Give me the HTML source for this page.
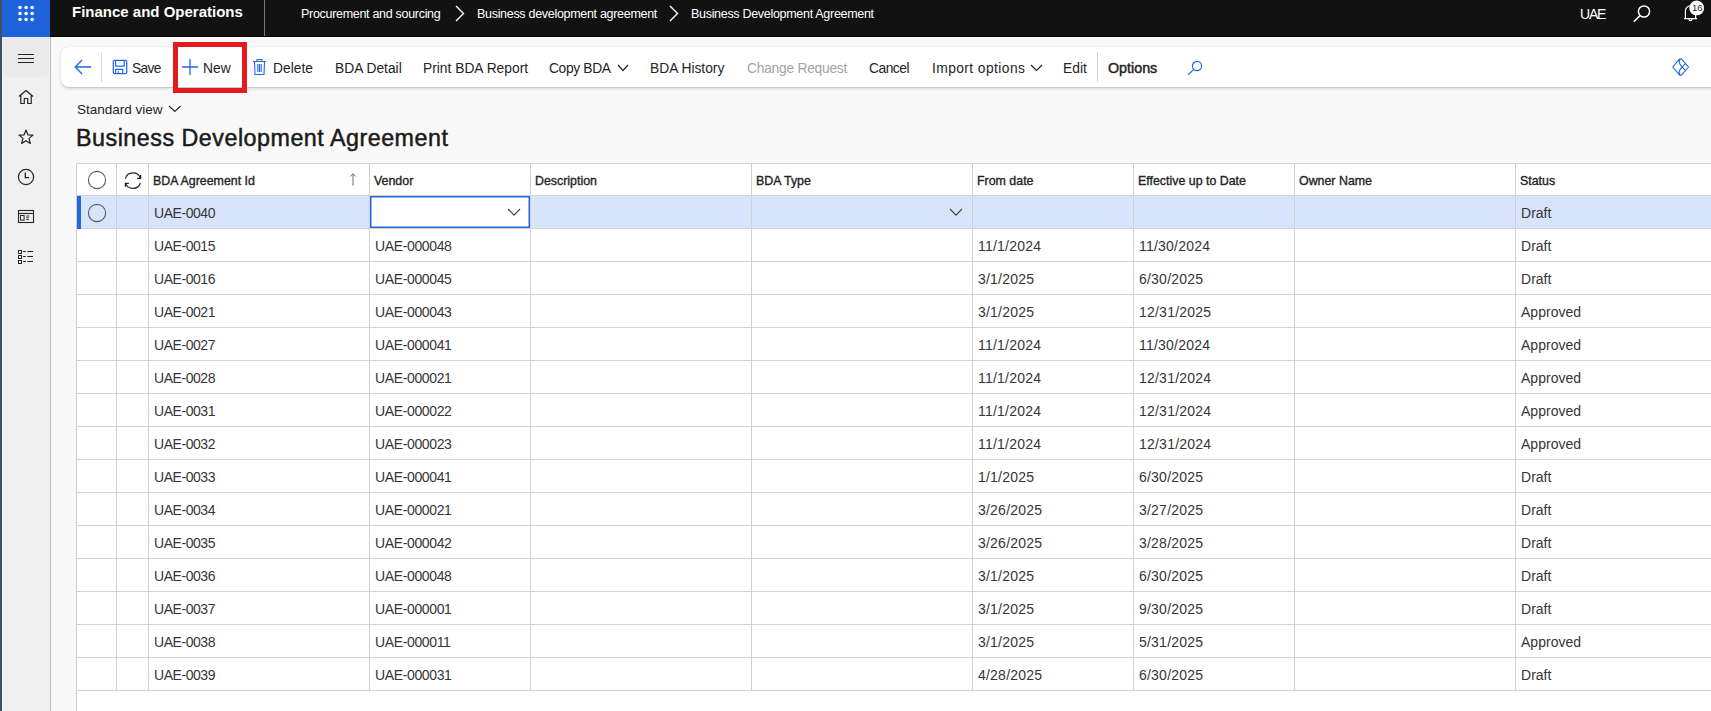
<!DOCTYPE html>
<html><head><meta charset="utf-8">
<style>
*{box-sizing:border-box;margin:0;padding:0}
html,body{width:1711px;height:711px;overflow:hidden;background:#f9f9f9;font-family:"Liberation Sans",sans-serif;color:#242424}
.abs{position:absolute}
#strip{left:0;top:0;width:2px;height:711px;background:#414e66}
#hdr{left:2px;top:0;width:1709px;height:37px;background:#121212;border-bottom:1px solid #000}
#launch{left:2px;top:0;width:48px;height:37px;background:#1f63db}
.dot{position:absolute;width:3.6px;height:3.6px;border-radius:50%;background:#fff}
#nav{left:2px;top:37px;width:49px;height:674px;background:#f1f0f0;border-right:1px solid #b9b9b9}
#ham{left:3px;top:37px;width:46px;height:40px;background:#ebeaea;border-radius:0 0 6px 6px}
.t{position:absolute;white-space:nowrap;line-height:1}
#brand{left:72px;top:4px;font-size:15px;font-weight:bold;color:#fff}
#hsep{left:264px;top:0;width:1px;height:36px;background:#76767c}
.bc{color:#fff;font-size:12.5px;letter-spacing:-0.3px;top:8px}
#uae{left:1580px;top:7px;font-size:14px;letter-spacing:-1.2px;color:#fff}
#ap{left:61px;top:47px;width:1670px;height:40px;background:#fff;border-radius:8px;box-shadow:0 1.6px 3.6px rgba(0,0,0,.13),0 .3px .9px rgba(0,0,0,.11)}
.ab{position:absolute;top:62px;font-size:13.8px;color:#242424;white-space:nowrap;line-height:1}
#redbox{left:173px;top:42px;width:74px;height:51px;border:5px solid #e41b1b}
#sv{left:77px;top:103px;font-size:13.5px;color:#242424}
#title{left:76px;top:127px;font-size:23.3px;letter-spacing:0.5px;color:#1b1b1b;-webkit-text-stroke:0.5px #1b1b1b}
#grid{left:76px;top:163px;width:1640px;height:560px;background:#fff;border-left:1px solid #d1d1d1;border-top:1px solid #d1d1d1}
.hl{position:absolute;left:76px;width:1640px;height:1px;background:#d1d1d1}
.vl{position:absolute;width:1px;background:#d1d1d1}
.hd{position:absolute;top:175px;font-size:12.4px;font-weight:normal;-webkit-text-stroke:0.35px #242424;color:#242424;white-space:nowrap;line-height:1}
.c{position:absolute;font-size:14px;color:#363636;white-space:nowrap;line-height:1}
</style></head><body>
<div id="strip" class="abs"></div>
<div id="hdr" class="abs"></div>
<div id="launch" class="abs"></div>
<svg class="abs" style="left:0;top:0" width="50" height="30" viewBox="0 0 50 30"><circle cx="20" cy="7.4" r="1.75" fill="#fff"/><circle cx="26.1" cy="7.4" r="1.75" fill="#fff"/><circle cx="32.2" cy="7.4" r="1.75" fill="#fff"/><circle cx="20" cy="13.5" r="1.75" fill="#fff"/><circle cx="26.1" cy="13.5" r="1.75" fill="#fff"/><circle cx="32.2" cy="13.5" r="1.75" fill="#fff"/><circle cx="20" cy="19.6" r="1.75" fill="#fff"/><circle cx="26.1" cy="19.6" r="1.75" fill="#fff"/><circle cx="32.2" cy="19.6" r="1.75" fill="#fff"/></svg>
<div id="brand" class="t">Finance and Operations</div>
<div id="hsep" class="abs"></div>
<div class="t bc" style="left:301px">Procurement and sourcing</div>
<svg class="abs" style="left:454px;top:5px" width="12" height="17" viewBox="0 0 12 17"><path d="M2 1 L9.5 8.5 L2 16" fill="none" stroke="#fff" stroke-width="1.4"/></svg>
<div class="t bc" style="left:477px">Business development agreement</div>
<svg class="abs" style="left:668px;top:5px" width="12" height="17" viewBox="0 0 12 17"><path d="M2 1 L9.5 8.5 L2 16" fill="none" stroke="#fff" stroke-width="1.4"/></svg>
<div class="t bc" style="left:691px">Business Development Agreement</div>
<div id="uae" class="t">UAE</div>
<svg class="abs" style="left:1632px;top:4px" width="20" height="20" viewBox="0 0 20 20"><circle cx="12" cy="7.5" r="5.6" fill="none" stroke="#fff" stroke-width="1.5"/><path d="M8 11.6 L1.8 17.8" stroke="#fff" stroke-width="1.5"/></svg>
<svg class="abs" style="left:1680px;top:0px" width="31" height="24" viewBox="0 0 31 24"><path d="M4 18.6 h13 M5.4 18.6 V11 a5.1 5.1 0 0 1 10.2 0 V18.6 M9 19.2 a1.5 1.5 0 0 0 3 0" fill="none" stroke="#fff" stroke-width="1.2"/><circle cx="16.7" cy="7.9" r="7.4" fill="#fff"/></svg>
<div class="t" style="left:1692px;top:3px;font-size:9.6px;letter-spacing:-0.2px;color:#242424">16</div>

<div id="nav" class="abs"></div>
<div id="ham" class="abs"></div>
<svg class="abs" style="left:17px;top:52px" width="18" height="12" viewBox="0 0 18 12"><path d="M1 2.5 H17 M1 6.5 H17 M1 10.5 H17" stroke="#242424" stroke-width="1"/></svg>
<svg class="abs" style="left:18px;top:89px" width="16" height="16" viewBox="0 0 16 16"><path d="M1 7.5 L8 1.5 L15 7.5 M2.8 6 V14.5 H6.3 V9.5 H9.7 V14.5 H13.2 V6" fill="none" stroke="#242424" stroke-width="1.2" stroke-linejoin="round"/></svg>
<svg class="abs" style="left:18px;top:129px" width="16" height="16" viewBox="0 0 16 16"><path d="M8 1 L9.9 5.8 L15 6.1 L11 9.4 L12.3 14.5 L8 11.7 L3.7 14.5 L5 9.4 L1 6.1 L6.1 5.8 Z" fill="none" stroke="#242424" stroke-width="1.2" stroke-linejoin="round"/></svg>
<svg class="abs" style="left:17px;top:168px" width="18" height="18" viewBox="0 0 18 18"><circle cx="9" cy="9" r="7.6" fill="none" stroke="#242424" stroke-width="1.2"/><path d="M8.3 4.5 V9.6 H12" fill="none" stroke="#242424" stroke-width="1.3"/></svg>
<svg class="abs" style="left:12px;top:200px" width="28" height="70" viewBox="0 0 28 70"><rect x="6.5" y="10.5" width="15" height="12" fill="none" stroke="#242424" stroke-width="1.1"/><path d="M6.5 13.5 H21.5" stroke="#242424" stroke-width="1.1"/><rect x="8.5" y="15.5" width="3.6" height="4.6" fill="none" stroke="#242424" stroke-width="1"/><path d="M14.2 16 H17.3 M14.2 17.8 H16.8 M14.2 19.6 H16.8" stroke="#242424" stroke-width="0.9"/><rect x="6.5" y="50.5" width="3" height="3" fill="none" stroke="#242424" stroke-width="1"/><rect x="6.5" y="55.5" width="3" height="3" fill="none" stroke="#242424" stroke-width="1"/><rect x="6.5" y="60.5" width="3" height="3" fill="none" stroke="#242424" stroke-width="1"/><path d="M11 51.5 H13.8 M15.3 51.5 H21 M11 56.5 H13.8 M15.3 56.5 H21 M11 61.5 H13.8 M15.3 61.5 H21" stroke="#242424" stroke-width="1"/></svg>

<!-- Action pane -->
<div id="ap" class="abs"></div>
<svg class="abs" style="left:74px;top:59px" width="18" height="16" viewBox="0 0 18 16"><path d="M8 1 L1.3 8 L8 15 M1.5 8 H17" fill="none" stroke="#2266e3" stroke-width="1.3"/></svg>
<div class="abs" style="left:101px;top:52px;width:1px;height:30px;background:#d6d6d6"></div>
<svg class="abs" style="left:112px;top:59px" width="16" height="16" viewBox="0 0 16 16"><rect x="1.3" y="1.3" width="13.4" height="13.2" rx="1" fill="none" stroke="#2266e3" stroke-width="1.25"/><path d="M3.6 1.3 V7.1 H12.2 V1.3 M3.6 14.5 V10.3 H10.7 V14.5 M6.4 12.3 V14.5" fill="none" stroke="#2266e3" stroke-width="1.2"/></svg>
<div class="ab" style="left:132px;letter-spacing:-0.7px">Save</div>
<svg class="abs" style="left:181px;top:58px" width="18" height="18" viewBox="0 0 18 18"><path d="M9 1 V17 M1 9 H17" stroke="#2266e3" stroke-width="1.3"/></svg>
<div class="ab" style="left:203px">New</div>
<svg class="abs" style="left:252px;top:58px" width="15" height="18" viewBox="0 0 15 18"><path d="M1 3.5 H14 M5 3.5 V1.5 H10 V3.5 M2.5 3.5 L3 16.5 H12 L12.5 3.5 M5.8 6 V14 M7.5 6 V14 M9.2 6 V14" fill="none" stroke="#2266e3" stroke-width="1.1"/></svg>
<div class="ab" style="left:273px">Delete</div>
<div class="ab" style="left:335px">BDA Detail</div>
<div class="ab" style="left:423px">Print BDA Report</div>
<div class="ab" style="left:549px;letter-spacing:-0.35px">Copy BDA</div>
<svg class="abs" style="left:617px;top:64px" width="12" height="8" viewBox="0 0 12 8"><path d="M1 1 L6 6.5 L11 1" fill="none" stroke="#242424" stroke-width="1.2"/></svg>
<div class="ab" style="left:650px">BDA History</div>
<div class="ab" style="left:747px;color:#a3a3a3;letter-spacing:-0.25px">Change Request</div>
<div class="ab" style="left:869px;letter-spacing:-0.5px">Cancel</div>
<div class="ab" style="left:932px;letter-spacing:0.42px">Import options</div>
<svg class="abs" style="left:1030px;top:64px" width="13" height="8" viewBox="0 0 13 8"><path d="M1 1 L6.5 6.5 L12 1" fill="none" stroke="#242424" stroke-width="1.2"/></svg>
<div class="ab" style="left:1063px">Edit</div>
<div class="abs" style="left:1097px;top:52px;width:1px;height:30px;background:#d6d6d6"></div>
<div class="ab" style="left:1108px;top:61px;font-size:14.3px;-webkit-text-stroke:0.45px #242424">Options</div>
<svg class="abs" style="left:1187px;top:60px" width="16" height="16" viewBox="0 0 16 16"><circle cx="10" cy="6" r="4.6" fill="none" stroke="#2266e3" stroke-width="1.2"/><path d="M6.7 9.3 L1.2 14.8" stroke="#2266e3" stroke-width="1.2"/></svg>
<svg class="abs" style="left:1670px;top:56px" width="22" height="22" viewBox="0 0 22 22"><path d="M2.8 11 L9.2 3.3 Q10.5 2.4 11.8 3.3 L18.6 11 L11.8 18.7 Q10.5 19.6 9.2 18.7 Z M10 3.4 Q7.6 6.4 12.2 11 Q7.6 15.6 10 18.6 M12.2 11 L15.4 7.3 M12.2 11 L15.4 14.7" fill="none" stroke="#2266e3" stroke-width="1.1" stroke-linejoin="round"/></svg>
<div id="redbox" class="abs"></div>

<div id="sv" class="t">Standard view</div>
<svg class="abs" style="left:168px;top:105px" width="14" height="8" viewBox="0 0 14 8"><path d="M1 1 L6.8 6.5 L12.6 1" fill="none" stroke="#242424" stroke-width="1.1"/></svg>
<div id="title" class="t">Business Development Agreement</div>

<!-- Grid -->
<div id="grid" class="abs"></div>
<!--ROWS-->
<div class="abs" style="left:77px;top:196px;width:1640px;height:32px;background:#d8e4fb"></div>
<div class="hl" style="top:195px"></div>
<div class="hl" style="top:228px"></div>
<div class="hl" style="top:261px"></div>
<div class="hl" style="top:294px"></div>
<div class="hl" style="top:327px"></div>
<div class="hl" style="top:360px"></div>
<div class="hl" style="top:393px"></div>
<div class="hl" style="top:426px"></div>
<div class="hl" style="top:459px"></div>
<div class="hl" style="top:492px"></div>
<div class="hl" style="top:525px"></div>
<div class="hl" style="top:558px"></div>
<div class="hl" style="top:591px"></div>
<div class="hl" style="top:624px"></div>
<div class="hl" style="top:657px"></div>
<div class="hl" style="top:690px"></div>
<div class="vl" style="left:116px;top:163px;height:528px"></div>
<div class="vl" style="left:148px;top:163px;height:528px"></div>
<div class="vl" style="left:369px;top:163px;height:528px"></div>
<div class="vl" style="left:530px;top:163px;height:528px"></div>
<div class="vl" style="left:751px;top:163px;height:528px"></div>
<div class="vl" style="left:972px;top:163px;height:528px"></div>
<div class="vl" style="left:1133px;top:163px;height:528px"></div>
<div class="vl" style="left:1294px;top:163px;height:528px"></div>
<div class="vl" style="left:1515px;top:163px;height:528px"></div>
<div class="abs" style="left:77px;top:196px;width:4px;height:33px;background:#2266e3"></div>
<svg class="abs" style="left:87px;top:170px" width="20" height="20" viewBox="0 0 20 20"><circle cx="10" cy="10" r="8.6" fill="none" stroke="#5c5c5c" stroke-width="1.1"/></svg>
<svg class="abs" style="left:120px;top:168px" width="26" height="26" viewBox="0 0 26 26"><path d="M5.44 10.58 A7.8 7.6 0 0 1 20.4 10.2 M20.36 15.02 A7.8 7.6 0 0 1 5.57 15.4" fill="none" stroke="#242424" stroke-width="1.2"/><path d="M20.6 6.9 V10.4 H17.1 M8.9 15.3 H5.4 V18.8" fill="none" stroke="#242424" stroke-width="1.3"/></svg>
<div class="hd" style="left:153px">BDA Agreement Id</div>
<div class="hd" style="left:374px">Vendor</div>
<div class="hd" style="left:535px">Description</div>
<div class="hd" style="left:756px">BDA Type</div>
<div class="hd" style="left:977px">From date</div>
<div class="hd" style="left:1138px">Effective up to Date</div>
<div class="hd" style="left:1299px">Owner Name</div>
<div class="hd" style="left:1520px">Status</div>
<svg class="abs" style="left:348px;top:172px" width="10" height="14" viewBox="0 0 10 14"><path d="M5 13.5 V1.8 M2.3 4.5 L5 1.8 L7.7 4.5" fill="none" stroke="#616161" stroke-width="0.9"/></svg>
<svg class="abs" style="left:87px;top:203px" width="20" height="20" viewBox="0 0 20 20"><circle cx="10" cy="10" r="8.6" fill="none" stroke="#5c5c5c" stroke-width="1.1"/></svg>
<svg class="abs" style="left:370px;top:196px" width="160" height="32" viewBox="0 0 160 32"><rect x="0.75" y="0.75" width="158.5" height="30.5" fill="#fff" stroke="#2266e3" stroke-width="1.5"/></svg>
<svg class="abs" style="left:507px;top:208px" width="14" height="9" viewBox="0 0 14 9"><path d="M1 1 L7 7.2 L13 1" fill="none" stroke="#424242" stroke-width="1.2"/></svg>
<svg class="abs" style="left:949px;top:208px" width="14" height="9" viewBox="0 0 14 9"><path d="M1 1 L7 7.2 L13 1" fill="none" stroke="#424242" stroke-width="1.2"/></svg>
<div class="c" style="left:154px;top:206px;letter-spacing:-0.45px">UAE-0040</div>
<div class="c" style="left:1521px;top:206px;letter-spacing:0.02px">Draft</div>
<div class="c" style="left:154px;top:239px;letter-spacing:-0.45px">UAE-0015</div>
<div class="c" style="left:375px;top:239px;letter-spacing:-0.37px">UAE-000048</div>
<div class="c" style="left:978px;top:239px;letter-spacing:0.22px">11/1/2024</div>
<div class="c" style="left:1139px;top:239px;letter-spacing:0.22px">11/30/2024</div>
<div class="c" style="left:1521px;top:239px;letter-spacing:0.02px">Draft</div>
<div class="c" style="left:154px;top:272px;letter-spacing:-0.45px">UAE-0016</div>
<div class="c" style="left:375px;top:272px;letter-spacing:-0.37px">UAE-000045</div>
<div class="c" style="left:978px;top:272px;letter-spacing:0.22px">3/1/2025</div>
<div class="c" style="left:1139px;top:272px;letter-spacing:0.22px">6/30/2025</div>
<div class="c" style="left:1521px;top:272px;letter-spacing:0.02px">Draft</div>
<div class="c" style="left:154px;top:305px;letter-spacing:-0.45px">UAE-0021</div>
<div class="c" style="left:375px;top:305px;letter-spacing:-0.37px">UAE-000043</div>
<div class="c" style="left:978px;top:305px;letter-spacing:0.22px">3/1/2025</div>
<div class="c" style="left:1139px;top:305px;letter-spacing:0.22px">12/31/2025</div>
<div class="c" style="left:1521px;top:305px;letter-spacing:0.02px">Approved</div>
<div class="c" style="left:154px;top:338px;letter-spacing:-0.45px">UAE-0027</div>
<div class="c" style="left:375px;top:338px;letter-spacing:-0.37px">UAE-000041</div>
<div class="c" style="left:978px;top:338px;letter-spacing:0.22px">11/1/2024</div>
<div class="c" style="left:1139px;top:338px;letter-spacing:0.22px">11/30/2024</div>
<div class="c" style="left:1521px;top:338px;letter-spacing:0.02px">Approved</div>
<div class="c" style="left:154px;top:371px;letter-spacing:-0.45px">UAE-0028</div>
<div class="c" style="left:375px;top:371px;letter-spacing:-0.37px">UAE-000021</div>
<div class="c" style="left:978px;top:371px;letter-spacing:0.22px">11/1/2024</div>
<div class="c" style="left:1139px;top:371px;letter-spacing:0.22px">12/31/2024</div>
<div class="c" style="left:1521px;top:371px;letter-spacing:0.02px">Approved</div>
<div class="c" style="left:154px;top:404px;letter-spacing:-0.45px">UAE-0031</div>
<div class="c" style="left:375px;top:404px;letter-spacing:-0.37px">UAE-000022</div>
<div class="c" style="left:978px;top:404px;letter-spacing:0.22px">11/1/2024</div>
<div class="c" style="left:1139px;top:404px;letter-spacing:0.22px">12/31/2024</div>
<div class="c" style="left:1521px;top:404px;letter-spacing:0.02px">Approved</div>
<div class="c" style="left:154px;top:437px;letter-spacing:-0.45px">UAE-0032</div>
<div class="c" style="left:375px;top:437px;letter-spacing:-0.37px">UAE-000023</div>
<div class="c" style="left:978px;top:437px;letter-spacing:0.22px">11/1/2024</div>
<div class="c" style="left:1139px;top:437px;letter-spacing:0.22px">12/31/2024</div>
<div class="c" style="left:1521px;top:437px;letter-spacing:0.02px">Approved</div>
<div class="c" style="left:154px;top:470px;letter-spacing:-0.45px">UAE-0033</div>
<div class="c" style="left:375px;top:470px;letter-spacing:-0.37px">UAE-000041</div>
<div class="c" style="left:978px;top:470px;letter-spacing:0.22px">1/1/2025</div>
<div class="c" style="left:1139px;top:470px;letter-spacing:0.22px">6/30/2025</div>
<div class="c" style="left:1521px;top:470px;letter-spacing:0.02px">Draft</div>
<div class="c" style="left:154px;top:503px;letter-spacing:-0.45px">UAE-0034</div>
<div class="c" style="left:375px;top:503px;letter-spacing:-0.37px">UAE-000021</div>
<div class="c" style="left:978px;top:503px;letter-spacing:0.22px">3/26/2025</div>
<div class="c" style="left:1139px;top:503px;letter-spacing:0.22px">3/27/2025</div>
<div class="c" style="left:1521px;top:503px;letter-spacing:0.02px">Draft</div>
<div class="c" style="left:154px;top:536px;letter-spacing:-0.45px">UAE-0035</div>
<div class="c" style="left:375px;top:536px;letter-spacing:-0.37px">UAE-000042</div>
<div class="c" style="left:978px;top:536px;letter-spacing:0.22px">3/26/2025</div>
<div class="c" style="left:1139px;top:536px;letter-spacing:0.22px">3/28/2025</div>
<div class="c" style="left:1521px;top:536px;letter-spacing:0.02px">Draft</div>
<div class="c" style="left:154px;top:569px;letter-spacing:-0.45px">UAE-0036</div>
<div class="c" style="left:375px;top:569px;letter-spacing:-0.37px">UAE-000048</div>
<div class="c" style="left:978px;top:569px;letter-spacing:0.22px">3/1/2025</div>
<div class="c" style="left:1139px;top:569px;letter-spacing:0.22px">6/30/2025</div>
<div class="c" style="left:1521px;top:569px;letter-spacing:0.02px">Draft</div>
<div class="c" style="left:154px;top:602px;letter-spacing:-0.45px">UAE-0037</div>
<div class="c" style="left:375px;top:602px;letter-spacing:-0.37px">UAE-000001</div>
<div class="c" style="left:978px;top:602px;letter-spacing:0.22px">3/1/2025</div>
<div class="c" style="left:1139px;top:602px;letter-spacing:0.22px">9/30/2025</div>
<div class="c" style="left:1521px;top:602px;letter-spacing:0.02px">Draft</div>
<div class="c" style="left:154px;top:635px;letter-spacing:-0.45px">UAE-0038</div>
<div class="c" style="left:375px;top:635px;letter-spacing:-0.37px">UAE-000011</div>
<div class="c" style="left:978px;top:635px;letter-spacing:0.22px">3/1/2025</div>
<div class="c" style="left:1139px;top:635px;letter-spacing:0.22px">5/31/2025</div>
<div class="c" style="left:1521px;top:635px;letter-spacing:0.02px">Approved</div>
<div class="c" style="left:154px;top:668px;letter-spacing:-0.45px">UAE-0039</div>
<div class="c" style="left:375px;top:668px;letter-spacing:-0.37px">UAE-000031</div>
<div class="c" style="left:978px;top:668px;letter-spacing:0.22px">4/28/2025</div>
<div class="c" style="left:1139px;top:668px;letter-spacing:0.22px">6/30/2025</div>
<div class="c" style="left:1521px;top:668px;letter-spacing:0.02px">Draft</div>
<!--/ROWS-->
</body></html>
